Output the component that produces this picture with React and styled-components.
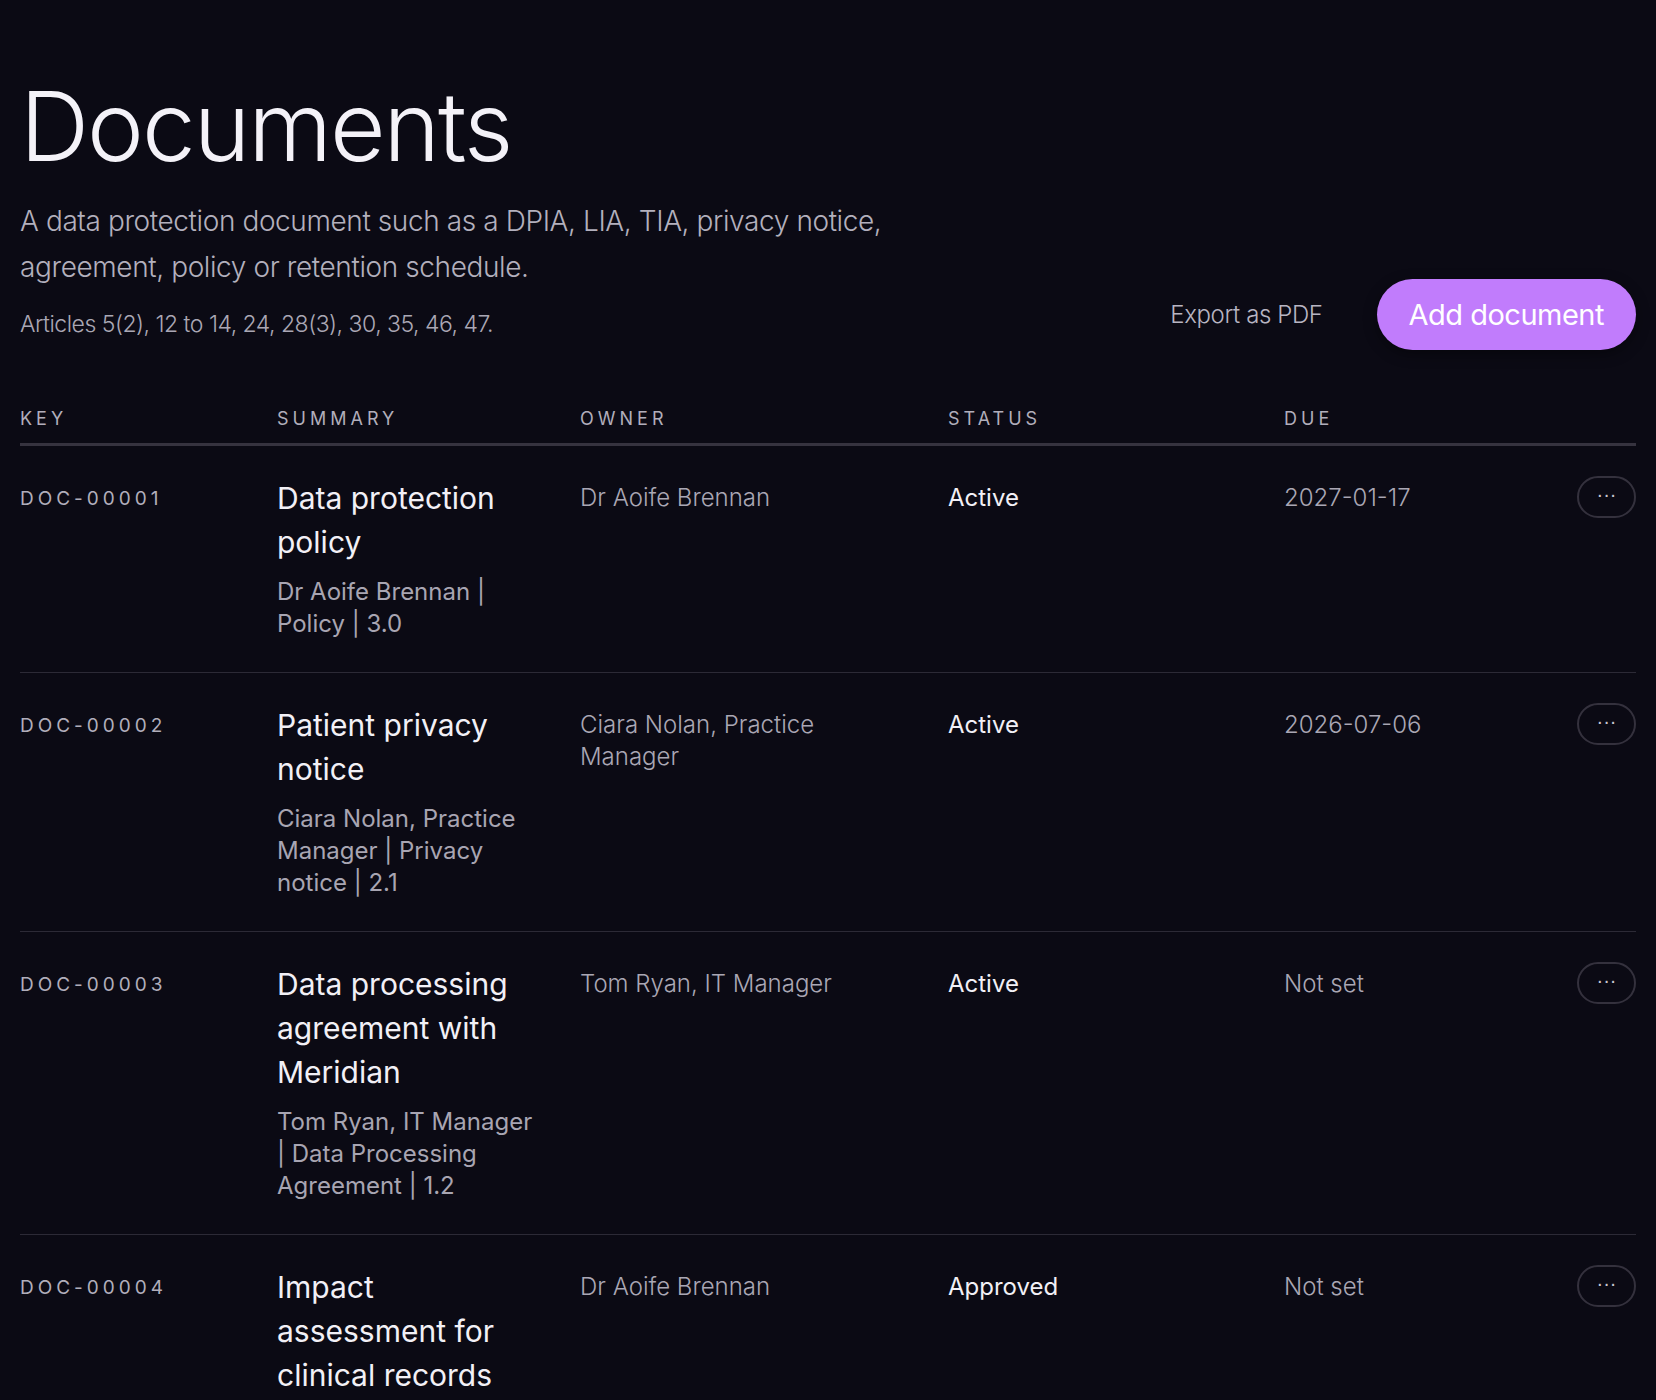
import React from 'react'
import styled, { createGlobalStyle } from 'styled-components'

const Global = createGlobalStyle`
  body {
    margin: 0;
    background: #0b0a14;
    color: #eeecf4;
    font-family: Inter, "Noto Sans", sans-serif;
  }
`

const Page = styled.main`
  padding: 74px 20px 40px;
`

const Header = styled.header`
  display: flex;
  justify-content: space-between;
  align-items: flex-end;
`

const Intro = styled.div`
  max-width: 880px;
`

const Title = styled.h1`
  margin: 0 0 18px;
  font-size: 96px;
  font-weight: 300;
  letter-spacing: -2px;
  line-height: 1.1;
  color: #f4f2f8;
`

const Lead = styled.p`
  margin: 0;
  font-size: 28px;
  line-height: 46px;
  font-weight: 300;
  color: #b3b0bd;
  letter-spacing: -0.4px;
`

const Articles = styled.p`
  margin: 20px 0 0;
  font-size: 23px;
  font-weight: 300;
  color: #aaa7b4;
  letter-spacing: -0.5px;
`

const Actions = styled.div`
  display: flex;
  align-items: center;
  gap: 48px;
  margin-bottom: -12px;
`

const GhostButton = styled.button`
  background: none;
  border: 0;
  color: #b8b5c2;
  font: 300 24px Inter, sans-serif;
  letter-spacing: -0.4px;
  cursor: pointer;
`

const PrimaryButton = styled.button`
  background: #c17cfc;
  border: 0;
  border-radius: 36px;
  height: 71px;
  padding: 0 32px;
  color: #fff;
  font: 400 29px Inter, sans-serif;
  letter-spacing: -0.5px;
  box-shadow: 0 4px 14px rgba(0,0,0,0.4);
`

const cols = '257px 303px 368px 336px 1fr 59px'

const HeadRow = styled.div`
  display: grid;
  grid-template-columns: ${cols};
  margin-top: 70px;
  padding-bottom: 14px;
  border-bottom: 3px solid #36333f;
`

const HeadCell = styled.div`
  font-size: 18px;
  letter-spacing: 4px;
  color: #b1aebb;
  text-transform: uppercase;
`

const Row = styled.div`
  display: grid;
  grid-template-columns: ${cols};
  padding: 30px 0 32px;
  border-bottom: 1px solid #2c2a36;
  align-items: start;
`

const Key = styled.div`
  font-size: 19px;
  letter-spacing: 4px;
  color: #b1aebb;
  padding-top: 11px;
`

const Summary = styled.div`
  padding-right: 40px;
`

const DocTitle = styled.div`
  font-size: 30px;
  line-height: 44px;
  color: #f2f0f6;
`

const Meta = styled.div`
  margin-top: 12px;
  font-size: 24px;
  line-height: 32px;
  color: #a8a5b2;
`

const Cell = styled.div`
  font-size: 24px;
  line-height: 32px;
  padding-top: 6px;
  padding-right: 40px;
  color: ${p => (p.$strong ? '#f2f0f6' : '#aaa7b4')};
  font-weight: ${p => (p.$strong ? 400 : 300)};
`

const MoreButton = styled.button`
  width: 59px;
  height: 42px;
  border-radius: 21px;
  border: 2px solid #34313d;
  background: transparent;
  color: #c9c6d2;
  font-size: 20px;
  line-height: 1;
  padding: 0 0 6px;
`

const docs = [
  { key: 'DOC-00001', title: 'Data protection policy', meta: 'Dr Aoife Brennan | Policy | 3.0', owner: 'Dr Aoife Brennan', status: 'Active', due: '2027-01-17' },
  { key: 'DOC-00002', title: 'Patient privacy notice', meta: 'Ciara Nolan, Practice Manager | Privacy notice | 2.1', owner: 'Ciara Nolan, Practice Manager', status: 'Active', due: '2026-07-06' },
  { key: 'DOC-00003', title: 'Data processing agreement with Meridian', meta: 'Tom Ryan, IT Manager | Data Processing Agreement | 1.2', owner: 'Tom Ryan, IT Manager', status: 'Active', due: 'Not set' },
  { key: 'DOC-00004', title: 'Impact assessment for clinical records', meta: 'Dr Aoife Brennan | DPIA | 1.0', owner: 'Dr Aoife Brennan', status: 'Approved', due: 'Not set' },
]

export default function App() {
  return (
    <Page>
      <Global />
      <Header>
        <Intro>
          <Title>Documents</Title>
          <Lead>A data protection document such as a DPIA, LIA, TIA, privacy notice, agreement, policy or retention schedule.</Lead>
          <Articles>Articles 5(2), 12 to 14, 24, 28(3), 30, 35, 46, 47.</Articles>
        </Intro>
        <Actions>
          <GhostButton>Export as PDF</GhostButton>
          <PrimaryButton>Add document</PrimaryButton>
        </Actions>
      </Header>
      <HeadRow>
        <HeadCell>Key</HeadCell>
        <HeadCell>Summary</HeadCell>
        <HeadCell>Owner</HeadCell>
        <HeadCell>Status</HeadCell>
        <HeadCell>Due</HeadCell>
        <div />
      </HeadRow>
      {docs.map(d => (
        <Row key={d.key}>
          <Key>{d.key}</Key>
          <Summary>
            <DocTitle>{d.title}</DocTitle>
            <Meta>{d.meta}</Meta>
          </Summary>
          <Cell>{d.owner}</Cell>
          <Cell $strong>{d.status}</Cell>
          <Cell>{d.due}</Cell>
          <MoreButton aria-label="More">···</MoreButton>
        </Row>
      ))}
    </Page>
  )
}
